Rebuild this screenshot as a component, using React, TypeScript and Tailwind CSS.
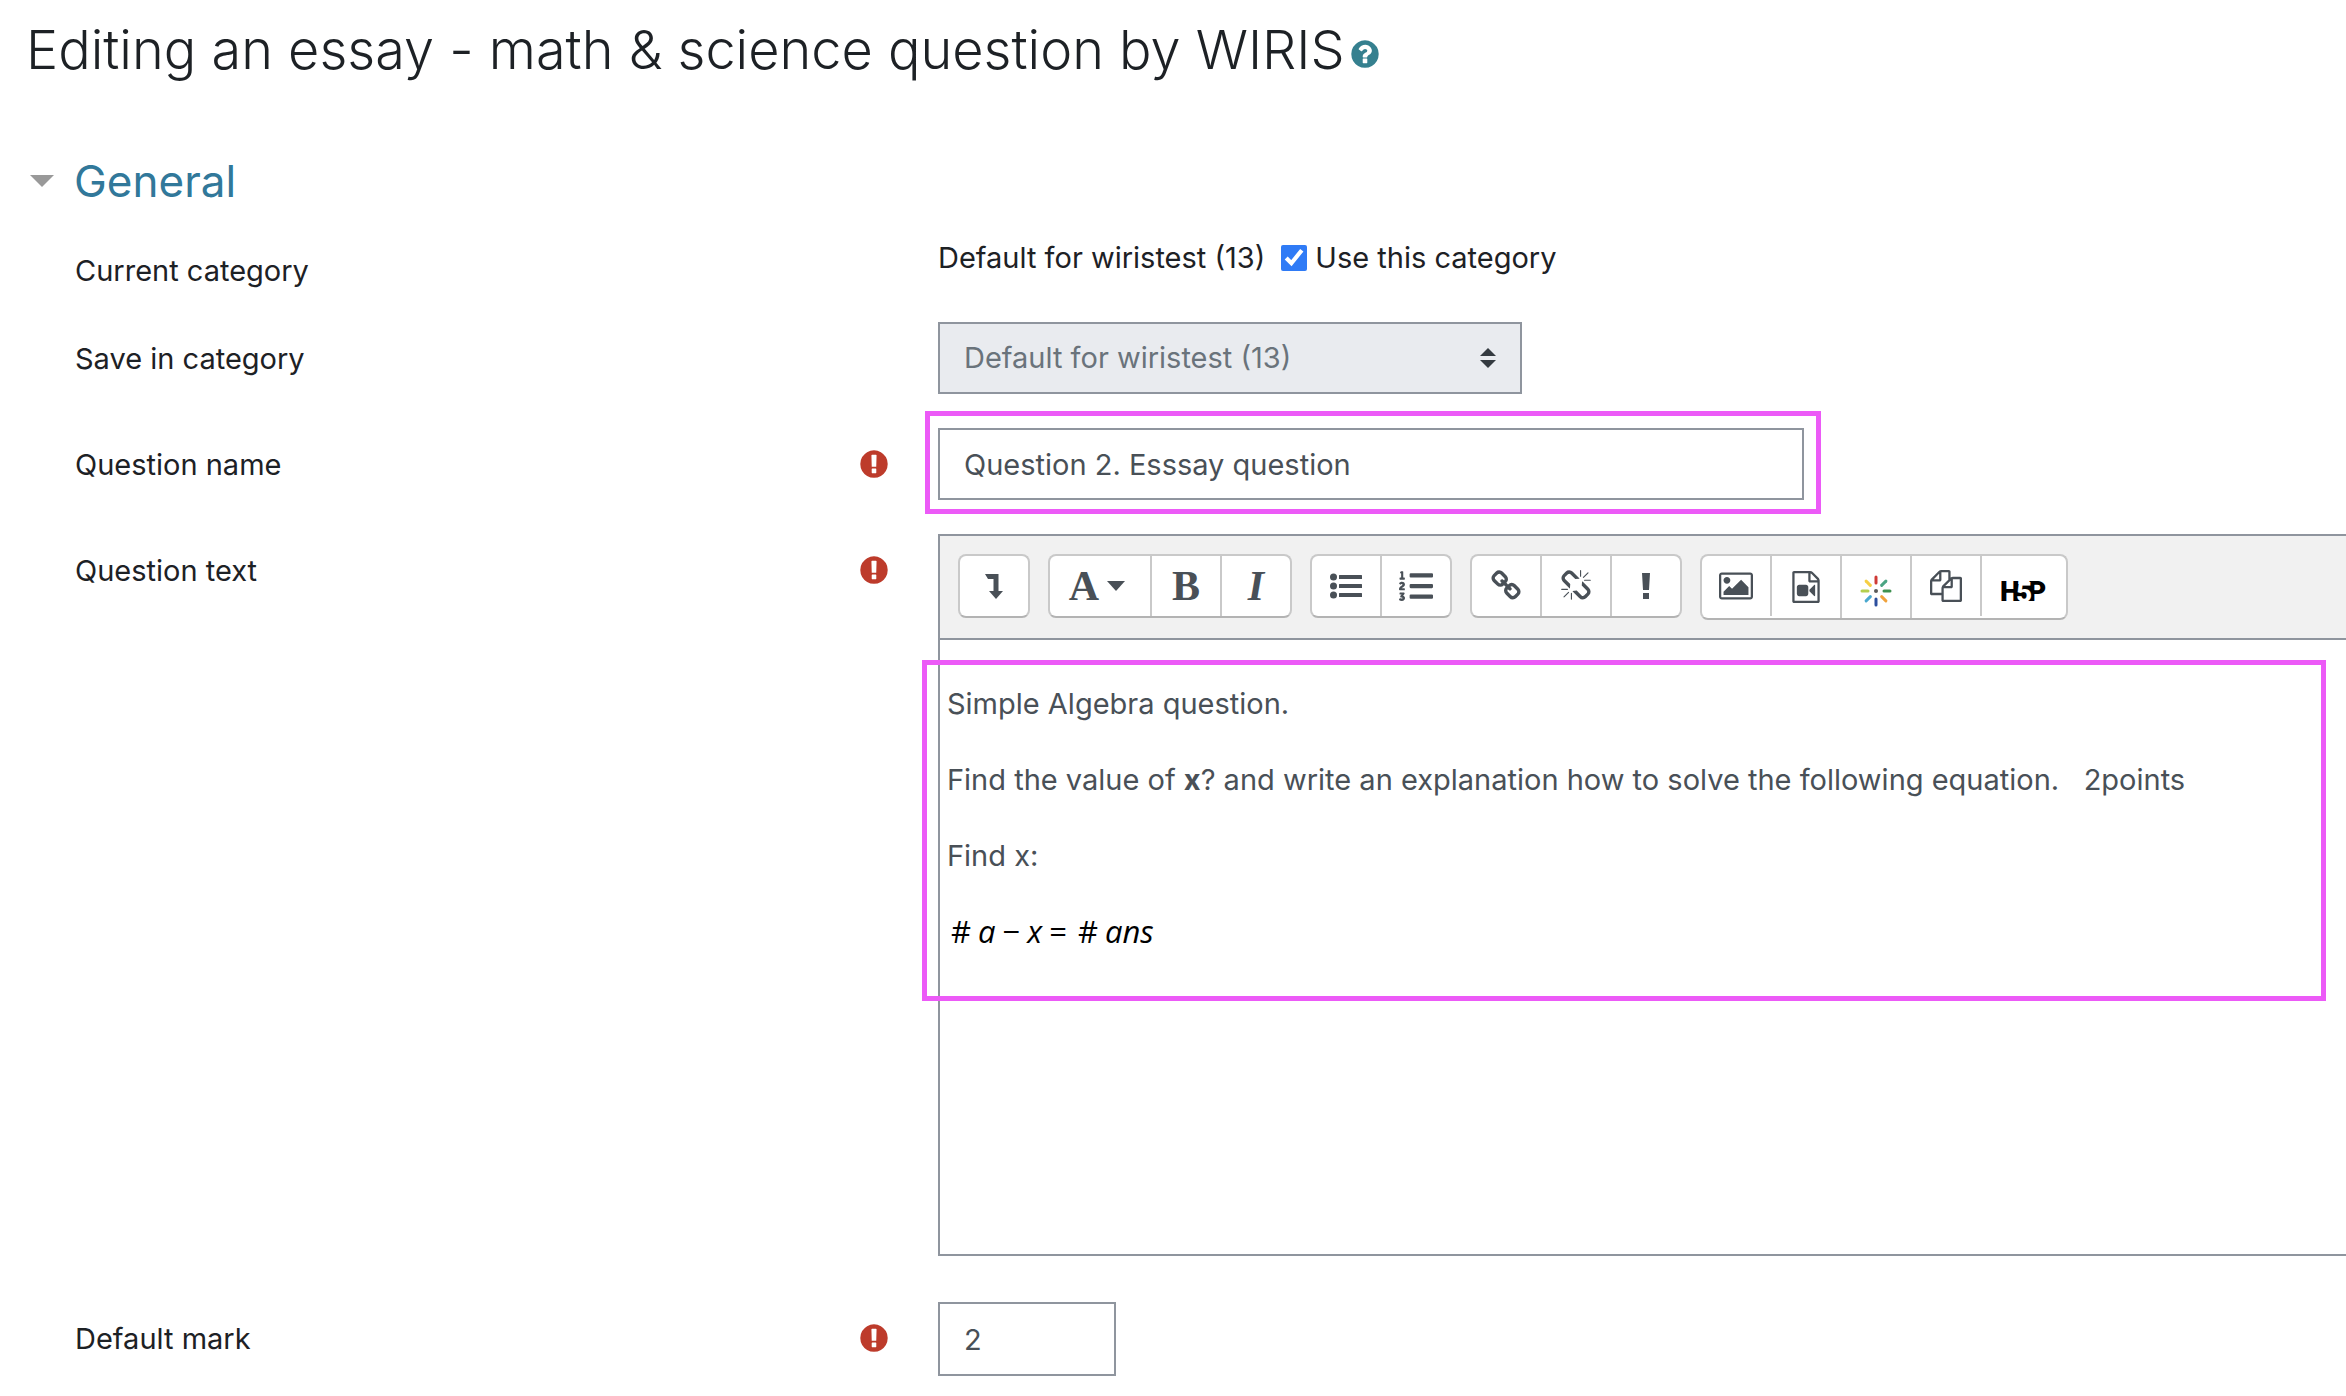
import type { ReactNode } from "react";
import { FaListOl } from "react-icons/fa";

function Icon({ d, size = 32, box = "0 0 1792 1792" }: { d: string; size?: number; box?: string }) {
  return (
    <svg width={size} height={size} viewBox={box} fill="currentColor" aria-hidden="true">
      <path d={d} />
    </svg>
  );
}

const icons = {
  question:
    "M1024 1376v-192q0-14-9-23t-23-9h-192q-14 0-23 9t-9 23v192q0 14 9 23t23 9h192q14 0 23-9t9-23zm256-672q0-88-55.500-163t-138.500-116-170-41q-243 0-371 213-15 24 8 42l132 100q7 6 19 6 16 0 25-12 53-68 86-92 34-24 86-24 48 0 85.500 26t37.500 59q0 38-20 61t-68 45q-63 28-115.500 86.500t-52.500 125.500v36q0 14 9 23t23 9h192q14 0 23-9t9-23q0-19 21.500-49.500t54.500-49.500q32-18 49-28.500t46-35 44.500-48 28-60.500 12.500-81zm384 192q0 209-103 385.500t-279.500 279.500-385.500 103-385.500-103-279.500-279.500-103-385.500 103-385.500 279.500-279.500 385.500-103 385.500 103 279.500 279.500 103 385.500z",
  required:
    "M896 128q209 0 385.500 103t279.500 279.500 103 385.500-103 385.500-279.500 279.500-385.500 103-385.500-103-279.500-279.500-103-385.500 103-385.500 279.500-279.500 385.500-103zm128 1247v-190q0-14-9-23.500t-22-9.500h-192q-13 0-23 10t-10 23v190q0 13 10 23t23 10h192q13 0 22-9.500t9-23.500zm-2-344l18-621q0-12-10-18-10-8-24-8h-220q-14 0-24 8-10 6-10 18l17 621q0 10 10 17.500t24 7.500h185q14 0 23.500-7.500t10.500-17.500z",
  link: "M1520 1216q0-40-28-68l-208-208q-28-28-68-28-42 0-72 32 3 3 19 18.500t21.500 21.500 15 19 13 25.500 3.500 27.500q0 40-28 68t-68 28q-15 0-27.500-3.500t-25.500-13-19-15-21.500-21.500-18.500-19q-33 31-33 73 0 40 28 68l206 207q27 27 68 27 40 0 68-26l147-146q28-28 28-67zm-703-705q0-40-28-68l-206-207q-28-28-68-28-39 0-68 27l-147 146q-28 28-28 67 0 40 28 68l208 208q27 27 68 27 42 0 72-31-3-3-19-18.500t-21.500-21.500-15-19-13-25.500-3.500-27.500q0-40 28-68t68-28q15 0 27.500 3.500t25.500 13 19 15 21.500 21.500 18.500 19q33-31 33-73zm895 705q0 120-85 203l-147 146q-83 83-203 83-121 0-204-85l-206-207q-83-83-83-203 0-123 88-209l-88-88q-86 88-208 88-120 0-204-84l-208-208q-84-84-84-204t85-203l147-146q83-83 203-83 121 0 204 85l206 207q83 83 83 203 0 123-88 209l88 88q86-88 208-88 120 0 204 84l208 208q84 84 84 204z",
  unlink:
    "M503 1271l-256 256q-10 9-23 9-12 0-23-9-9-10-9-23t9-23l256-256q10-9 23-9t23 9q9 10 9 23t-9 23zm169 41v320q0 14-9 23t-23 9-23-9-9-23v-320q0-14 9-23t23-9 23 9 9 23zm-224-224q0 14-9 23t-23 9h-320q-14 0-23-9t-9-23 9-23 23-9h320q14 0 23 9t9 23zm1264 128q0 120-85 203l-147 146q-83 83-203 83-121 0-204-85l-334-335q-21-21-42-56l239-18 273 274q28 28 68 28t68-27l147-146q28-28 28-67 0-40-28-68l-274-275 18-239q35 21 56 42l336 336q84 86 84 204zm-617-724l-239 18-273-274q-28-28-68-28-39 0-68 27l-147 146q-28 28-28 67 0 40 28 68l274 274-18 240q-35-21-56-42l-336-336q-84-86-84-204 0-120 85-203l147-146q83-83 203-83 121 0 204 85l334 335q21 21 42 56zm633 84q0 14-9 23t-23 9h-320q-14 0-23-9t-9-23 9-23 23-9h320q14 0 23 9t9 23zm-544-544v320q0 14-9 23t-23 9-23-9-9-23v-320q0-14 9-23t23-9 23 9 9 23zm407 151l-256 256q-11 9-23 9t-23-9q-9-10-9-23t9-23l256-256q10-9 23-9t23 9q9 10 9 23t-9 23z",
  picture:
    "M576 576q0 80-56 136t-136 56-136-56-56-136 56-136 136-56 136 56 56 136zm1024 384v448h-1408v-192l320-320 160 160 512-512zm96-704h-1600q-13 0-22.500 9.500t-9.500 22.500v1216q0 13 9.500 22.500t22.500 9.500h1600q13 0 22.500-9.500t9.500-22.500v-1216q0-13-9.500-22.500t-22.500-9.500zm160 32v1216q0 66-47 113t-113 47h-1600q-66 0-113-47t-47-113v-1216q0-66 47-113t113-47h1600q66 0 113 47t47 113z",
  video:
    "M1596 380q28 28 48 76t20 88v1152q0 40-28 68t-68 28h-1344q-40 0-68-28t-28-68v-1600q0-40 28-68t68-28h896q40 0 88 20t76 48zm-444-244v376h376q-10-29-22-41l-313-313q-12-12-41-22zm384 1528v-1024h-416q-40 0-68-28t-28-68v-416h-768v1536h1280zm-640-896q52 0 90 38t38 90v384q0 52-38 90t-90 38h-384q-52 0-90-38t-38-90v-384q0-52 38-90t90-38h384zm492 2q20 8 20 30v576q0 22-20 30-8 2-12 2-14 0-23-9l-265-266v-90l265-266q9-9 23-9 4 0 12 2z",
  files:
    "M1696 384q40 0 68 28t28 68v1216q0 40-28 68t-68 28h-960q-40 0-68-28t-28-68v-288h-544q-40 0-68-28t-28-68v-672q0-40 20-88t48-76l408-408q28-28 76-48t88-20h416q40 0 68 28t28 68v328q68-40 128-40h416zm-544 213l-299 299h299v-299zm-640-384l-299 299h299v-299zm196 647l316-316v-416h-384v416q0 40-28 68t-68 28h-416v640h512v-256q0-40 20-88t48-76zm956 804v-1152h-384v416q0 40-28 68t-68 28h-416v640h896z",
};

function BulletIcon() {
  return (
    <svg width="32" height="32" viewBox="0 0 32 32" fill="currentColor" aria-hidden="true">
      {[7, 16, 25].map((y) => (
        <g key={y}>
          <circle cx="3.500" cy={y} r="3.500" />
          <rect x="9" y={y - 2} width="23" height="4" rx="0.500" />
        </g>
      ))}
    </svg>
  );
}

const rays = ["#cf3a36", "#4ba583", "#3f9150", "#f0a23c", "#2c4f9e", "#4aa8cf", "#b5cf4e", "#f6cf45"];

function WirisIcon() {
  return (
    <svg width="32" height="32" viewBox="-16 -16 32 32" aria-hidden="true">
      {rays.map((color, i) => (
        <path key={color} d="M0-14V-8" stroke={color} strokeWidth="3" strokeLinecap="round" transform={`rotate(${i * 45})`} />
      ))}
      <circle r="2" fill="#5a5a5a" />
    </svg>
  );
}

function H5PIcon() {
  return (
    <svg width="46" height="32" viewBox="0 0 46 32" fill="#000" fontFamily="Roboto, sans-serif" fontWeight="900" fontSize="28" aria-hidden="true">
      <text x="-1" y="26">H</text>
      <text x="27" y="26">P</text>
      <path d="M14 9h18v17H14z" />
      <text x="15" y="27" fill="#fff" fontWeight="800">5</text>
    </svg>
  );
}

function Group({ children }: { children: ReactNode }) {
  return (
    <div className="flex items-start divide-x-2 divide-[#c9c9c9] overflow-hidden rounded-lg border-2 border-[#c9c9c9] border-b-[#b3b3b3] bg-white">
      {children}
    </div>
  );
}

function Tool({ label, className = "h-[60px] w-[68px]", children }: { label: string; className?: string; children: ReactNode }) {
  return (
    <button type="button" aria-label={label} className={`box-content flex items-center justify-center ${className}`}>
      {children}
    </button>
  );
}

function Row({ label, id, required = false, gap = "pb-[34px]", children }: { label: string; id: string; required?: boolean; gap?: string; children: ReactNode }) {
  return (
    <div className={`flex items-start ${gap}`}>
      <div className="flex w-[38%] shrink-0 items-start pr-12">
        <label id={`${id}-label`} htmlFor={id} className="flex-1 pt-[13px] leading-[48px]">
          {label}
        </label>
        {required && (
          <span className="pt-5 text-[#bd3b2b]" role="img" aria-label="Required">
            <Icon d={icons.required} />
          </span>
        )}
      </div>
      <div className="min-w-0 flex-1">{children}</div>
    </div>
  );
}

export default function App() {
  return (
    <main className="overflow-hidden bg-white font-['Inter',sans-serif] text-[29px] text-[#1d2125]">
      <h2 className="flex items-center pt-3 pl-[26px] text-[54px] leading-[76px] font-light">
        Editing an essay - math &amp; science question by WIRIS
        <a href="#help" aria-label="Help" className="mt-2 ml-1 text-[#35808f]">
          <Icon d={icons.question} />
        </a>
      </h2>

      <form>
        <h3 className="mt-14 mb-4 flex h-[74px] items-center gap-5 pl-[30px] text-[44px] text-[#31789a]">
          <svg width="24" height="12" viewBox="0 0 24 12" fill="#999" aria-hidden="true">
            <path d="M0 0h24L12 12z" />
          </svg>
          <a href="#general">General</a>
        </h3>

        <div className="pl-[75px]">
          <Row label="Current category" id="usecategory" gap="pb-[27px]">
            <div className="flex items-center leading-[48px]">
              Default for wiristest (13)
              <input id="usecategory" type="checkbox" defaultChecked className="mr-2 ml-4 size-[26px] accent-[#2f7bf6]" />
              <label htmlFor="usecategory">Use this category</label>
            </div>
          </Row>
          <Row label="Save in category" id="category">
            <div className="relative w-[584px]">
              <select id="category" disabled className="block h-[72px] w-full appearance-none border-2 border-[#8f959e] bg-[#e9ebef] px-6 text-[#6a737b] opacity-100">
                <option>Default for wiristest (13)</option>
              </select>
              <svg width="16" height="20" viewBox="0 0 16 20" fill="#343a40" className="absolute top-[26px] right-[26px]" aria-hidden="true">
                <path d="M8 0l8 8H0zM0 12h16l-8 8z" />
              </svg>
            </div>
          </Row>
          <Row label="Question name" id="name" required>
            <div className="relative w-[866px]">
              <input id="name" defaultValue="Question 2. Esssay question" className="block h-[72px] w-full border-2 border-[#8f959e] px-6 text-[#495057]" />
              <div className="pointer-events-none absolute -top-[17px] -right-[17px] -bottom-[14px] -left-[13px] border-[5px] border-[#ec5af7]" />
            </div>
          </Row>
          <Row label="Question text" id="text" required gap="pb-[46px]">
            <div className="border-2 border-r-0 border-[#8f959e]">
              <div className="flex items-start gap-[18px] border-b-2 border-[#8f959e] bg-[#f1f1f1] p-[18px] text-[#495057]">
                <Group>
                  <Tool label="Show more buttons">
                    <svg width="18" height="25" viewBox="0 0 18 25" fill="currentColor" aria-hidden="true">
                      <path d="M0 0h13.500v17H18l-7 8-7-8h4.500V5H3z" />
                    </svg>
                  </Tool>
                </Group>
                <Group>
                  <Tool label="Paragraph styles" className="h-[60px] w-[94px] pr-[6px]">
                    <span className="font-['Liberation_Serif',serif] text-[42px] font-bold">A</span>
                    <svg width="18" height="10" viewBox="0 0 18 10" fill="currentColor" className="ml-2" aria-hidden="true">
                      <path d="M0 0h18L9 10z" />
                    </svg>
                  </Tool>
                  <Tool label="Bold">
                    <span className="font-['Liberation_Serif',serif] text-[42px] font-bold">B</span>
                  </Tool>
                  <Tool label="Italic">
                    <span className="font-['Liberation_Serif',serif] text-[42px] font-bold italic">I</span>
                  </Tool>
                </Group>
                <Group>
                  <Tool label="Unordered list"><BulletIcon /></Tool>
                  <Tool label="Ordered list"><FaListOl size={34} /></Tool>
                </Group>
                <Group>
                  <Tool label="Link"><Icon d={icons.link} /></Tool>
                  <Tool label="Unlink"><Icon d={icons.unlink} /></Tool>
                  <Tool label="Prevent automatic linking">
                    <svg width="8" height="26" viewBox="0 0 8 26" fill="currentColor" aria-hidden="true">
                      <path d="M0 0h8L7 17H1zM1 20h6v6H1z" />
                    </svg>
                  </Tool>
                </Group>
                <Group>
                  <Tool label="Insert image"><Icon d={icons.picture} size={34} box="-64 0 1920 1792" /></Tool>
                  <Tool label="Insert media" className="h-[62px] w-[68px]"><Icon d={icons.video} /></Tool>
                  <Tool label="Math editor" className="h-[54px] w-[68px] pt-2"><WirisIcon /></Tool>
                  <Tool label="Manage files"><Icon d={icons.files} /></Tool>
                  <Tool label="Insert H5P" className="h-[54px] w-[84px] pt-2"><H5PIcon /></Tool>
                </Group>
              </div>
              <div className="relative">
                <div
                  role="textbox"
                  aria-labelledby="text-label"
                  contentEditable
                  suppressContentEditableWarning
                  className="flex h-[614px] flex-col gap-[30px] px-[7px] pt-[41px] leading-[46px] text-[#495057]"
                >
                  <p>Simple Algebra question.</p>
                  <p>Find the value of <b>x</b>? and write an explanation how to solve the following equation. &nbsp; 2points</p>
                  <p>Find x:</p>
                  <p className="flex gap-[7px] pl-1 font-['Open_Sans',sans-serif] text-[31px] leading-[44px] font-medium text-black">
                    <span>#</span>
                    <i>a</i>
                    <span>−</span>
                    <i>x</i>
                    <span>=</span>
                    <span className="pl-1">#</span>
                    <i>ans</i>
                  </p>
                </div>
                <div className="pointer-events-none absolute top-5 right-5 -left-[18px] h-[341px] border-[5px] border-[#ec5af7]" />
              </div>
            </div>
          </Row>
          <Row label="Default mark" id="mark" required gap="pb-5">
            <input id="mark" defaultValue="2" className="block h-[74px] w-[178px] border-2 border-[#8f959e] px-6 text-[#495057]" />
          </Row>
        </div>
      </form>
    </main>
  );
}
